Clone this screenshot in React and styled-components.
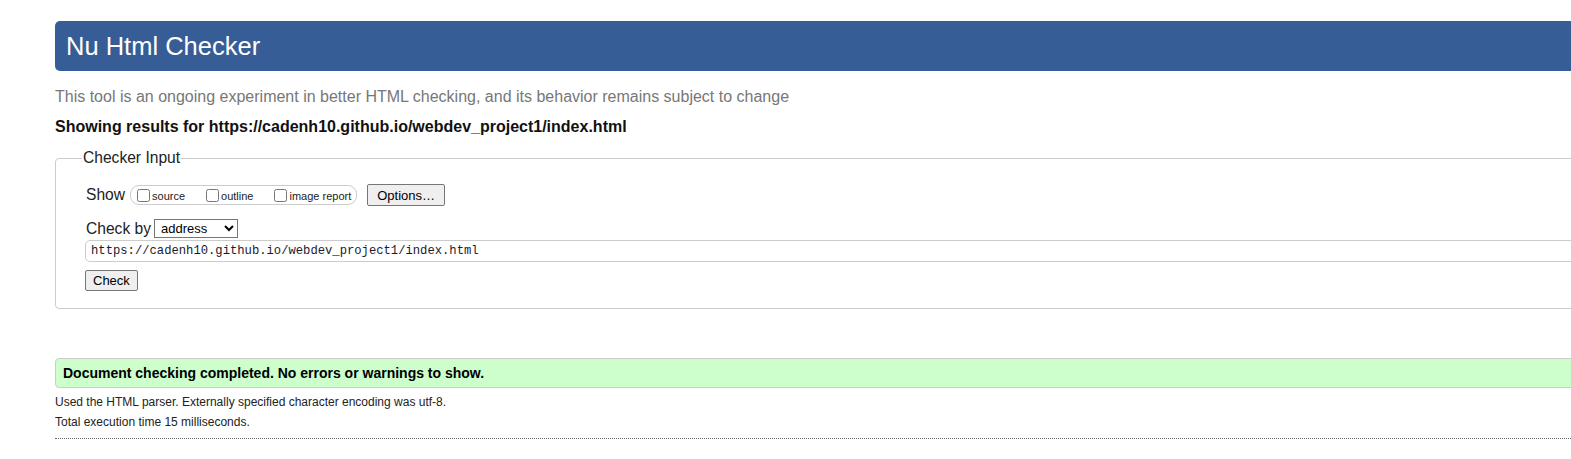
import React from "react";
import styled, { createGlobalStyle } from "styled-components";

const Global = createGlobalStyle`
  html, body { margin: 0; padding: 0; overflow: hidden; background: #fff; }
  body { font-family: "Liberation Sans", Arial, sans-serif; font-size: 13px; color: #000; }
`;

const Page = styled.div`
  width: 1640px;
  padding: 21px 0 0 55px;
`;

const Title = styled.h1`
  margin: 0;
  height: 50px;
  line-height: 50px;
  padding-left: 11px;
  background: #365d95;
  color: #fff;
  font-size: 25.5px;
  font-weight: normal;
  border-radius: 5px 0 0 5px;
`;

const Subtitle = styled.p`
  margin: 17px 0 0;
  font-size: 16px;
  line-height: 18px;
  color: #777;
`;

const Results = styled.p`
  margin: 12px 0 0;
  font-size: 16px;
  line-height: 18px;
  font-weight: bold;
  color: #111;
`;

const Fieldset = styled.fieldset`
  margin: 13px 0 0;
  padding: 0 0 17px 26px;
  border: 1px solid #ccc;
  border-radius: 4px 0 0 4px;
`;

const Legend = styled.legend`
  padding: 0 1px 0 1px;
  font-size: 15.6px;
  line-height: 18px;
  color: #222;
`;

const Body = styled.div`
  padding-left: 4px;
  display: flex;
  flex-direction: column;
`;

const Row = styled.div`
  display: flex;
  align-items: center;
  height: ${(p) => p.$h}px;
  margin-top: ${(p) => p.$mt}px;
`;

const Label = styled.span`
  font-size: 15.6px;
  color: #222;
`;

const Pill = styled.div`
  display: inline-flex;
  align-items: center;
  height: 18px;
  margin-left: 5px;
  padding: 0 5px 0 2px;
  border: 1px solid #ccc;
  border-radius: 9px;
`;

const Option = styled.label`
  display: inline-flex;
  align-items: flex-end;
  font-size: 11px;
  line-height: 12px;
  color: #222;
  margin-right: ${(p) => (p.$last ? 0 : 17)}px;
`;

const Box = styled.input.attrs({ type: "checkbox" })`
  width: 13px;
  height: 13px;
  margin: 0 2px 0 4px;
`;

const Button = styled.button`
  height: ${(p) => p.$h}px;
  margin-left: ${(p) => p.$ml || 0}px;
  padding: 0 ${(p) => p.$px}px;
  font-family: "Liberation Sans", Arial, sans-serif;
  font-size: 13px;
  color: #000;
  background: #efefef;
  border: 1px solid #767676;
  border-radius: 2px;
`;

const Select = styled.select`
  width: 84px;
  height: 19px;
  margin-left: 3px;
  font-family: "Liberation Sans", Arial, sans-serif;
  font-size: 13px;
  color: #000;
  background: #fff;
  border: 1px solid #767676;
  border-radius: 0;
  padding: 0 2px;
`;

const UrlInput = styled.div`
  margin-top: 2px;
  height: 20px;
  line-height: 20px;
  padding-left: 5px;
  border: 1px solid #ccc;
  border-radius: 5px 0 0 5px;
  font-family: "Liberation Mono", "DejaVu Sans Mono", monospace;
  font-size: 12.2px;
  color: #1a1a2e;
  margin-left: -1px;
`;

const ButtonRow = styled.div`
  margin-top: 8px;
  margin-left: -1px;
`;

const Success = styled.div`
  margin-top: 49px;
  height: 28px;
  line-height: 28px;
  padding-left: 7px;
  background: #ccffcc;
  border: 1px solid #ccc;
  border-radius: 4px 0 0 4px;
  font-weight: bold;
  font-size: 14px;
  color: #000;
`;

const Info = styled.p`
  margin: ${(p) => p.$mt}px 0 0;
  font-size: 12px;
  line-height: 20px;
  color: #222;
`;

const Rule = styled.hr`
  margin: 6px 0 0;
  border: 0;
  border-top: 1px dotted #666;
  height: 0;
`;

export default function App() {
  return (
    <>
      <Global />
      <Page>
        <Title>Nu Html Checker</Title>
        <Subtitle>
          This tool is an ongoing experiment in better HTML checking, and its behavior remains subject to change
        </Subtitle>
        <Results>Showing results for https://cadenh10.github.io/webdev_project1/index.html</Results>
        <Fieldset>
          <Legend>Checker Input</Legend>
          <Body>
            <Row $h={22} $mt={17}>
              <Label>Show</Label>
              <Pill>
                <Option>
                  <Box />
                  source
                </Option>
                <Option>
                  <Box />
                  outline
                </Option>
                <Option $last>
                  <Box />
                  image report
                </Option>
              </Pill>
              <Button $h={22} $px={9} $ml={10}>Options…</Button>
            </Row>
            <Row $h={19} $mt={13}>
              <Label>Check by</Label>
              <Select defaultValue="address">
                <option value="address">address</option>
                <option value="file">file upload</option>
                <option value="text">text input</option>
              </Select>
            </Row>
            <UrlInput>https://cadenh10.github.io/webdev_project1/index.html</UrlInput>
            <ButtonRow>
              <Button $h={21} $px={7}>Check</Button>
            </ButtonRow>
          </Body>
        </Fieldset>
        <Success>Document checking completed. No errors or warnings to show.</Success>
        <Info $mt={4}>Used the HTML parser. Externally specified character encoding was utf-8.</Info>
        <Info $mt={0}>Total execution time 15 milliseconds.</Info>
        <Rule />
      </Page>
    </>
  );
}
